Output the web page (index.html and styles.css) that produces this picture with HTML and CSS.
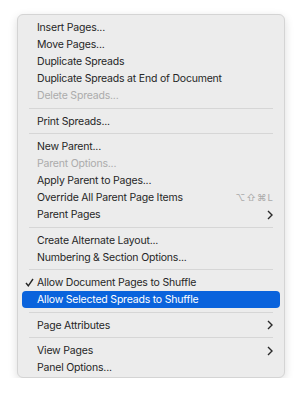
FILE: index.html
```html
<!DOCTYPE html>
<html lang="en">

<head>
    <meta charset="UTF-8">
    <title>Pages Panel Menu</title>
    <link rel="stylesheet" href="styles.css">
</head>

<body>
    <div class="menu">
        <div class="item">Insert Pages...</div>
        <div class="item">Move Pages...</div>
        <div class="item">Duplicate Spreads</div>
        <div class="item">Duplicate Spreads at End of Document</div>
        <div class="item disabled">Delete Spreads...</div>
        <div class="sep"></div>
        <div class="item">Print Spreads...</div>
        <div class="sep"></div>
        <div class="item">New Parent...</div>
        <div class="item disabled">Parent Options...</div>
        <div class="item">Apply Parent to Pages...</div>
        <div class="item">Override All Parent Page Items <span class="shortcut">⌥⇧⌘L</span></div>
        <div class="item">Parent Pages
            <svg class="chevron" width="6" height="10" viewBox="0 0 6 10"><polyline points="1,1 5,5 1,9" /></svg>
        </div>
        <div class="sep"></div>
        <div class="item">Create Alternate Layout...</div>
        <div class="item">Numbering &amp; Section Options...</div>
        <div class="sep"></div>
        <div class="item">
            <svg class="check" width="9" height="9" viewBox="0 0 9 9"><polyline points="1,5 3.3,7.8 8,1" /></svg>
            Allow Document Pages to Shuffle
        </div>
        <div class="item selected">Allow Selected Spreads to Shuffle</div>
        <div class="sep"></div>
        <div class="item">Page Attributes
            <svg class="chevron" width="6" height="10" viewBox="0 0 6 10"><polyline points="1,1 5,5 1,9" /></svg>
        </div>
        <div class="sep"></div>
        <div class="item">View Pages
            <svg class="chevron" width="6" height="10" viewBox="0 0 6 10"><polyline points="1,1 5,5 1,9" /></svg>
        </div>
        <div class="item">Panel Options...</div>
    </div>
</body>

</html>
```

FILE: styles.css
```css
* {
    margin: 0;
    padding: 0;
    box-sizing: border-box;
}

body {
    background: #ffffff;
    font-family: 'Inter', 'Liberation Sans', sans-serif;
    font-size: 10.5px;
    letter-spacing: -0.2px;
    color: #262626;
    padding: 14px 0 0 17px;
}

.menu {
    width: 268px;
    height: 364px;
    background-color: #ececec;
    border: 1px solid #d4d4d4;
    border-radius: 6px;
    box-shadow: 0 3px 10px rgba(0, 0, 0, 0.14);
    padding: 4px 4px;
}

.item {
    position: relative;
    height: 17px;
    line-height: 17px;
    padding-left: 15px;
    padding-right: 8px;
    border-radius: 4px;
    display: flex;
    justify-content: space-between;
    align-items: center;
    white-space: nowrap;
}

.item.disabled {
    color: #ababab;
}

.item.selected {
    background-color: #0a63dc;
    color: #ffffff;
}

.check {
    position: absolute;
    left: 3px;
    top: 4px;
    fill: none;
    stroke: #262626;
    stroke-width: 1.4;
}

.shortcut {
    color: #aaaaaa;
    font-size: 9.5px;
    letter-spacing: 1px;
    margin-right: -2px;
}

.chevron {
    fill: none;
    stroke: #2a2a2a;
    stroke-width: 1.4;
    margin-right: -1px;
}

.sep {
    height: 1px;
    background-color: #d6d6d6;
    margin: 3.5px 7px 4px 7px;
}
```
